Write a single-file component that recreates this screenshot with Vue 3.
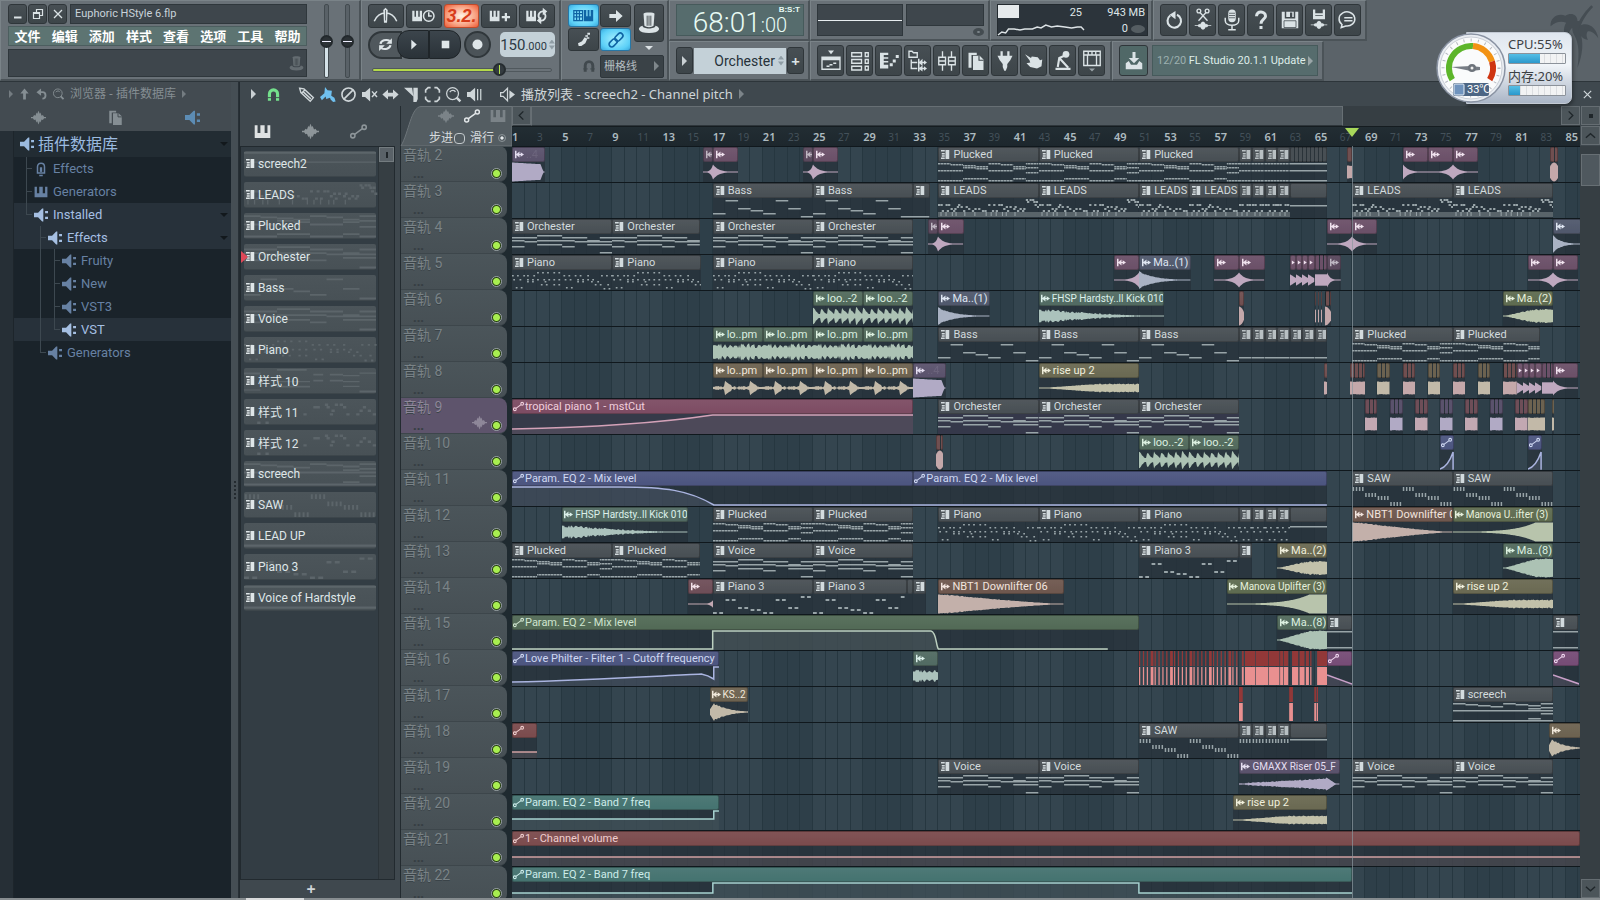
<script setup>
import { ref } from 'vue'

const BARS = 85.15
const pct = (bars) => (bars / BARS) * 100 + '%'

const S = 'fill="none" stroke="currentColor"'
const icons = {
  min: `<path d="M4 17h15v4H4z"/>`,
  max: `<path ${S} stroke-width="2.400" d="M3 9h12v12H3zM9 9V3h12v12h-6M3 11h12"/>`,
  close: `<path ${S} stroke-width="2.600" d="M4 4l16 16M20 4L4 20"/>`,
  metro: `<path ${S} stroke-width="2" d="M0 19C3 12 8 8 15 8s12 4 15 11"/><path d="M12 4l3-3 3 3-1 17h-4z"/><path stroke="#3f474c" d="M15 4v14"/>`,
  clockKeys: `<path d="M0 5h3v8h2V5h3v8h2V5h3v14H0z"/><circle cx="22" cy="12" r="7" fill="#3f474c" stroke="currentColor" stroke-width="2"/><path ${S} stroke-width="2" d="M22 7v5h4"/>`,
  keysPlus: `<path d="M2 5h3v8h2V5h3v8h2V5h3v14H2zM22 8h3v4h4v3h-4v4h-3v-4h-4v-3h4z"/>`,
  keysLoop: `<path d="M0 5h3v8h2V5h3v8h2V5h3v14H0z"/><path ${S} stroke-width="2.400" d="M18 16c-4-5 0-11 5-10M24 8c4 5 0 11-5 10"/><path d="M22 1l6 5-6 5zM20 13v10l-6-5z"/>`,
  loop: `<path ${S} stroke-width="3" d="M5 11a8 6 0 0 1 13-4M19 13a8 6 0 0 1-13 4"/><path d="M21 3v8h-8zM3 21v-8h8z"/>`,
  play: `<path d="M8 3l10 9-10 9z"/>`,
  stop: `<path d="M5 5h14v14H5z"/>`,
  rec: `<circle cx="12" cy="12" r="8"/>`,
  typing: `<path ${S} stroke-width="2" d="M1 4h14v16H1zM1 9h14M1 14h14M5.500 4v16M10 4v16"/><path d="M17 3h4v10h2V3h3v10h2V3h4v18H17z"/>`,
  arrow: `<path d="M2 9h10V3l10 9-10 9v-6H2z"/>`,
  slide: `<path d="M3 17l6-3 4-6 4 2-3 7-6 4-4 0z"/><path d="M14 5h4v2h-4zM17 1h4v3h-4zM16 8h4v2h-4z"/>`,
  link: `<g ${S} stroke-width="2.400" transform="rotate(-45 12 12)"><rect x="-1" y="8" width="14" height="8" rx="4"/><rect x="11" y="8" width="14" height="8" rx="4"/></g>`,
  hat: `<path d="M6 2c0-2 12-2 12 0l-1 13c-2 2-8 2-10 0z"/><path d="M5 15c-7 2-5 8 7 8s14-6 7-8c0 4-14 4-14 0z"/><path stroke="#3f474c" stroke-width="1" d="M10 4v11M12 4v11M14 4v11"/>`,
  magnet: `<path ${S} stroke-width="5" d="M5.500 22v-11a6.500 6.500 0 0 1 13 0v11"/><path stroke="#41494e" stroke-width="1.500" d="M2 17h8M14 17h8"/>`,
  undo: `<path ${S} stroke-width="2.800" d="M7 6a9 9 0 1 0 9-1"/><path d="M14 0v11L6 5z"/>`,
  cut: `<g ${S} stroke-width="1.800"><circle cx="6.500" cy="0" r="2.500"/><circle cx="17.500" cy="0" r="2.500"/><path d="M8 2l10 11M16 2L6 13"/></g><path d="M1 19h4l2-2 1 1 2-3 2-1 2 1 2 3 1-1 2 2h4v1h-4l-2 2-1-1-2 3-2 1-2-1-2-3-1 1-2-2H1z"/>`,
  mic: `<rect x="7" y="-2" width="10" height="17" rx="5"/><path ${S} stroke-width="2" d="M3 9v4c0 8 18 8 18 0V9M12 19v6M7 25h10"/><path stroke="#3f474c" d="M8 3h8M8 6h8M8 9h8"/>`,
  help: `<path ${S} stroke-width="4" d="M6 7c0-8 12-7 12 0 0 4-6 4-6 10"/><path d="M10 20h4v4h-4z"/>`,
  save: `<path d="M1 1h4v9h14V1h4v22H1zM7 1h10v7h-2V2h-3v6H7z"/><path stroke="#3f474c" fill="none" d="M4 13h16v9H4z"/>`,
  saveWave: `<path d="M4-2h3v5h10v-5h3v13H4z"/><path stroke="#3f474c" d="M7 6h10"/><path d="M1 18h4l2-2 1 1 2-3 2-1 2 1 2 3 1-1 2 2h4v1h-4l-2 2-1-1-2 3-2 1-2-1-2-3-1 1-2-2H1z"/>`,
  chat: `<path ${S} stroke-width="2" d="M3 22l1-4a10.500 9.500 0 1 1 5 2zM7 9h11M7 13h11"/>`,
  playlist: `<path d="M8-2h8l-4 5zM6 18h4v2H6zM10 16h4v2h-4zM15 14h4v2h-4z"/><path ${S} stroke-width="1.800" d="M0 7h24v16H0z"/><path d="M0 7h24v4H0z"/>`,
  chanrack: `<path ${S} stroke-width="1.800" d="M1 1h13v5H1zM1 10h13v5H1zM1 19h13v5H1zM19 1h4v5h-4zM19 10h4v5h-4zM19 19h4v5h-4z"/>`,
  pianoroll: `<path d="M0 1h11v3H5v3h6v2H5v3h6v2H5v3h6v5H0zM13 15h4v4h-4zM17 10h4v4h-4zM21 4h4v4h-4z"/>`,
  tree: `<path ${S} stroke-width="1.800" d="M0-1h4l2 2h5v6H0zM3 10v12h8M3 14h8"/><path d="M12 9h2v4l4-4v4h2v-2l4 3-4 3v-2h-2v4l-4-4v4h-2zM12 18h2v3l4-3v3h2v-2l4 3-4 3v-2h-2v3l-4-3v3h-2z"/>`,
  mixer: `<path ${S} stroke-width="1.800" d="M6-1v8M6 17v8M18-1v8M18 17v8M1 7h9v10H1zM14 7h9v10h-9zM1 12h9M14 12h9"/>`,
  pages: `<path d="M2 1h11v3H6v17H2zM8 5h9l5 5v14H8z"/><path stroke="#3f474c" stroke-width="1.500" fill="none" d="M16 5v6h6"/>`,
  plug: `<path d="M6-1h3v6h6v-6h3v6h4l-3 6-4 5v4l-2 5h-2l-2-5v-4l-4-5-3-6h4z"/>`,
  tap: `<path d="M0 3l8 5 1-2 8 1 3 4 3-1-1 9-6 3-9-2-5-5 5-1-1-3z"/>`,
  rob: `<path d="M2 21h20v3H2z"/><path ${S} stroke-width="2.800" d="M16 4L7 8 5 20M8 9l11 12"/><circle cx="16" cy="3" r="4.500"/>`,
  grid: `<path ${S} stroke-width="1.800" d="M1-1h22v19H1zM1 4h22M6 4v14M18 4v14M7 0v4M12 0v4M17 0v4"/><path fill="#9aa3a8" d="M8 22h8l-4 4z"/>`,
  download: `<path d="M10 0h4v8h5l-7 7-7-7h5z"/><path d="M1 15l4-3 3 5h8l3-5 4 3v8H1z"/>`,
  wave: `<path d="M0 11h3l2-3 2 1 2-5 1 2 2-5 2 5 1-2 2 5 2-1 2 3h3v2h-3l-2 3-2-1-2 5-1-2-2 5-2-5-1 2-2-5-2 1-2-3H0z"/>`,
  keys: `<path d="M1 3h4v11h4V3h6v11h4V3h4v18H1z"/>`,
  auto: `<path ${S} stroke-width="2.200" d="M6.500 16L17.500 8"/><circle cx="4" cy="18" r="3" ${S} stroke-width="2.200"/><circle cx="20" cy="6" r="3" ${S} stroke-width="2.200"/>`,
  up: `<path d="M12 0l9 11h-6v13H9V11H3z"/>`,
  back: `<path ${S} stroke-width="4" d="M8 8h6c9 0 9 14 0 14"/><path d="M11 0v16L1 8z"/>`,
  lens: `<circle cx="10.500" cy="10.500" r="9.500" ${S} stroke-width="2"/><path ${S} stroke-width="2" d="M6 8c3-4 8-3 9 0"/><path ${S} stroke-width="4" d="M17 17l6 6"/>`,
  plugin: `<path d="M0 8h7l7-7h2v22h-2l-7-7H0zM19 5h5v4h-5zM19 15h5v4h-5z"/>`,
  pencil: `<path ${S} stroke-width="2.200" d="M1 2l7 1 15 14-5 6L3 9zM6 7l13 12M10 4L4 10"/>`,
  paint: `<path d="M8 0l4 5 7 1-1 8 5 3 2 6-4 1-4-4-1-3-6 2-1-4-6 6-3-5 7-6z"/>`,
  ban: `<circle cx="12" cy="12" r="10.500" ${S} stroke-width="2.600"/><path ${S} stroke-width="2.600" d="M5 19L19 5"/>`,
  mute: `<path d="M0 8h5l8-7v22l-8-7H0z"/><path ${S} stroke-width="2.400" d="M16 7l8 9M24 7l-8 9"/>`,
  lr: `<path d="M-1 12l9-8v5h8V4l9 8-9 8v-5H8v5z"/>`,
  slice: `<path d="M0 1h13l2 14zM15 1h7v18l-2 5h-5z"/>`,
  zoomsel: `<path ${S} stroke-width="2.600" d="M1 9V5l4-4h4M15 1h4l4 4v4M23 15v4l-4 4h-4M9 23H5l-4-4v-4"/>`,
  speaker: `<path d="M0 8h5l8-7v22l-8-7H0zM16 3h2v18h-2zM21 3h2v18h-2z"/>`,
  speakerOut: `<path ${S} stroke-width="2" d="M1 9h4l7-7v20l-7-7H1z"/><path d="M15 5l9 7-9 7z"/>`,
  effect: `<path ${S} stroke-width="2.600" d="M6 19V8c0-8 12-8 12 0v11zM9 23h6"/><path d="M10 9h4v8h-4z"/>`,
  pattern: `<path d="M0 0h5v2H0zM1 4h4v2H1zM1 7h4v2H1zM0 10h5v2H0zM6 0h5v12H6z"/>`,
  sample: `<path d="M0 1h2v4.200L6 2v3.200h1.500V3L12 6 7.500 9V6.800H6V10L2 6.800V11H0z"/>`,
  mini: `<path d="M2 1l7 5-7 5z"/>`,
}

const menus = ['文件', '编辑', '添加', '样式', '查看', '选项', '工具', '帮助']
const fileTools = [['undo', '撤销'], ['cut', '剪切'], ['mic', '录音'], ['help', '帮助'], ['save', '保存'], ['saveWave', '渲染'], ['chat', '信息']]
const viewTools = ['playlist', 'chanrack', 'pianoroll', 'tree', 'mixer', 'pages', 'plug', 'tap', 'rob', 'grid']
const editTools = ['pencil', 'paint', 'ban', 'mute', 'lr', 'slice', 'zoomsel', 'lens', 'speaker']

const tree = [
  { t: 'Effects', i: 'effect', g: ['T'] },
  { t: 'Generators', i: 'keys', g: ['T'] },
  { t: 'Installed', i: 'plugin', g: ['L'], open: true, hot: true },
  { t: 'Effects', i: 'plugin', g: ['', 'T'], open: true, hot: true },
  { t: 'Fruity', i: 'plugin', g: ['', 'I', 'T'] },
  { t: 'New', i: 'plugin', g: ['', 'I', 'T'] },
  { t: 'VST3', i: 'plugin', g: ['', 'I', 'T'] },
  { t: 'VST', i: 'plugin', g: ['', 'I', 'L'], hot: true },
  { t: 'Generators', i: 'plugin', g: ['', 'L'] },
]

// Note maps: [bar offset, length in bars, y, height]
const line = (rows) => rows.flatMap((ys, b) => ys.map((y) => [b, 1, y, 1.5]))
const dots = (map, w, h) => Object.entries(map).flatMap(([y, xs]) => xs.map((x) => [x, w, +y, h]))
const orch = line([[3, 6, 12], [3, 7], [1, 6, 10], [1, 6, 10], [3, 6, 12], [3, 7], [6, 7, 10], [3, 7, 10, 18]])
const notes = {
  Bass: line([[15], [2], [10], [12], [15], [2], [10], [18]]),
  Orchester: orch,
  Voice: orch,
  Plucked: line([[1, 8, 18], [2, 8, 18], [3, 5, 16], [4, 6, 16], [1, 8, 18], [2, 8, 18], [4, 6, 16], [1, 5, 10, 18]]),
  Piano: dots({
    2: [2, 2.4, 2.8, 3.3, 3.7],
    5: [0, 0.4, 0.9, 1.2, 1.7, 4.1, 4.5, 5, 5.4, 6, 7.1, 7.5, 7.9],
    9: [0.1, 0.6, 1.2, 1.6, 2, 2.5, 2.9, 3.3, 3.7, 4.2, 4.6, 5.2, 5.6, 6, 6.4],
    11: [1.2, 1.6, 2.6, 5.2, 5.6, 6.3, 6.8],
    14: [2.3, 2.7, 3.3, 3.7, 6.6, 7, 7.6],
    17: [0.3, 0.7, 4.3, 4.7],
    18: [7.3, 7.7],
  }, 0.14, 1.5),
  LEADS: [
    ...dots({
      1: [7, 7.3, 7.5],
      3: [7.6, 7.1, 7.8],
      6: [0, 0.2, 0.6, 0.8, 1.6, 4, 4.4, 4.8, 5, 7.7],
      8: [1.5, 1.8, 2.2, 5.4, 5.7, 6.1, 7.9],
      10: [1, 1.3, 2.4, 2.9, 3.2, 5.2, 6, 6.5, 6.8],
      12: [0.3, 0.7, 1.2, 2, 2.7, 3.5, 3.7, 4.3, 4.6, 5.5, 6.3, 6.7],
    }, 0.18, 2),
    ...dots({ 14: [0.2, 0.6, 1.1, 1.4, 2.1, 2.9, 3.8, 4.2, 4.6, 5.1, 5.4, 6.1] }, 0.08, 4),
  ],
  SAW: [0, 1, 2, 3, 4, 5, 6, 7].flatMap((b) => [0.1, 0.35, 0.6, 0.85].map((o) => [b + o - 0.05, 0.12, [1, 7, 10, 16][b % 4], 4])),
  'Piano 3': dots({ 18: [0, 0.5, 4, 4.5], 5: [1, 1.5, 5, 5.5], 13: [2, 2.5, 6, 6.5], 15: [3, 3.5], 2: [7, 7.5] }, 0.3, 2),
  screech: line([[1, 8, 18], [2, 8, 18], [3, 8, 18], [4, 8, 18], [1, 8, 18], [2, 8, 18], [3, 6, 8, 16, 18], [1, 5, 8, 11, 18]]),
  hold: [[0, 2, 1, 1.5], [0, 2, 17, 1.5]],
  one: [],
  sawtick: [0.05, 0.3, 0.55, 0.8].map((o) => [o, 0.12, 1, 4]),
  'LEAD UP': [[0, 8, 17, 2]],
  screech2: [[0, 8, 0, 1.5], [0, 8, 8, 1]],
  'Voice of Hardstyle': [[0, 8, 0, 1.5], [0, 8, 17, 2]],
  '样式 10': [[0, 1, 3, 1.5], [0, 1, 17, 1], [2, 1.8, 0, 1.5], [2, 2, 14, 1.5], [2, 2, 10, 1], [4.2, 0.6, 4, 1.5], [5.2, 0.8, 4, 1.5], [4.2, 0.6, 9, 1.5], [5.2, 0.8, 9, 1.5], [6, 1, 5, 1], [6, 1, 10, 1], [6, 1, 14, 1], [7, 1, 3, 1], [7, 1, 18, 1.5]],
}
notes['样式 11'] = dots({ 3: [4.9, 5.5, 5.8], 5: [4.2, 4.4, 5, 6, 7.2], 8: [5.3, 7, 7.5], 11: [3.6, 5.2, 6.2, 6.8, 7.8], 18: [0.8, 1.3] }, 0.2, 2)
notes['样式 12'] = notes['样式 11']

const rect = ([x, w, y, h]) => `M${x * 100} ${y}h${w * 100}v${h}h${-w * 100}z`
const notePath = (key, len) => (notes[key] || []).filter((n) => n[0] < len).map(rect).join('')

const patterns = ['screech2', 'LEADS', 'Plucked', 'Orchester', 'Bass', 'Voice', 'Piano', '样式 10', '样式 11', '样式 12', 'screech', 'SAW', 'LEAD UP', 'Piano 3', 'Voice of Hardstyle']

const rnd = (i, s) => {
  const v = Math.sin(i * 12.9898 + s * 78.233) * 43758.5453
  return v - Math.floor(v)
}
const env = {
  block: (t) => (t < 0.88 ? 1 - t * 0.2 : t < 0.95 ? 0.8 - (t - 0.88) * 9 : 0.05),
  pre: (t) => Math.exp(-4.6 * (1 - t)) * 0.8,
  post: (t) => Math.exp(-4.6 * t) * 0.8,
  tail: (t) => Math.exp(-8 * (1 - t)) * 0.4,
  decay: (t, j) => Math.exp(-3.6 * t) * (1 - j * 0.15),
  kick: (t, j) => Math.pow(1 - t, 1.5) * (0.8 - j * 0.35),
  down: (t, j) => Math.pow(1 - t, 1.2) * (1.1 - j * 0.12),
  riser: (t, j) => Math.pow(Math.min(1, t / 0.65), 1.1) * (1 - j * 0.12),
  riserS: (t, j) => Math.pow(Math.min(1, t / 0.6), 1.1) * (0.75 - j * 0.18),
  uplift: (t) => Math.min(1, Math.exp(-5 * (0.82 - t))),
  rise: (t, j) => 0.06 + 0.42 * Math.min(1, Math.max(0, (t - 0.1) / 0.5)) * (1 - j * 0.25),
  beats: (t, j) => {
    const p = (t * 4) % 2
    return p < 0.9 ? 0.08 + j * 0.14 : p < 1.5 ? 0.85 * Math.exp(-1.8 * (p - 0.9)) : 0.25 * (1.9 - p) + j * 0.2
  },
  loop: (t, j) => {
    const p = (t * 7) % 1
    return p < 0.2 ? 0.95 - j * 0.3 : Math.max(0.2, 0.95 - p * 0.8 - j * 0.15)
  },
  dense: (t, j) => 0.4 + j * 0.35 + (((t * 9) % 1) < 0.5 ? 0.2 : 0),
  full: (t, j) => 0.7 - j * 0.06,
  sliver: (t) => 0.6 + 0.4 * Math.sin(t * 3.14),
  drop: (t) => 1 - t * t * 0.6,
  pulse: (t) => 0.6 * (1 - t * 0.7),
  pulseEnd: () => 0.6,
  gm: (t, j) => (t < 0.87 ? 0.1 + t * 0.6 - j * 0.1 : Math.max(0.05, 0.7 - (t - 0.87) * 7)),
  ks: (t, j) => (t < 0.12 ? 0.3 + t * 6 : Math.exp(-3 * (t - 0.12)) * (1 - j * 0.25)),
  noise: (t, j) => 0.35 + j * 0.35,
}
function wavePath(kind, len) {
  const n = Math.max(4, Math.round(len * 12.5))
  const top = []
  const bottom = []
  for (let i = 0; i <= n; i++) {
    const t = i / n
    const a = Math.max(0.06, Math.min(1, env[kind](t, rnd(i, 3)))) * 9.5
    const x = Math.round(t * len * 100)
    top.push(`${x} ${(10 - a).toFixed(1)}`)
    bottom.unshift(`${x} ${(10 + a).toFixed(1)}`)
  }
  return 'M' + top.concat(bottom).join('L') + 'z'
}

const P = (start, end, name) => ({ k: 'pattern', s: start, e: end, name, notes: name })
const rep = (name, ...starts) => starts.map((s) => P(s, s + 8, name))
const minis = (from, count, src) => Array.from({ length: count }, (_, i) => ({ k: 'pattern', s: from + i, e: from + i + 1, name: '', notes: src, tiny: true }))
const plain = (s, e, y, striped) => ({ k: 'pattern', s, e, name: '', bare: true, striped, rows: y })
const W = (color, wave, s, e, name = '', extra = {}) => ({ k: 'sample', color, wave, s, e, name, ...extra })
const A = (color, s, e, name, curve, extra = {}) => ({ k: 'auto', color, s, e, name, curve, ...extra })
const fade = { faded: true }
const tight = { tight: true }
const cluster = (color, s, e) => W(color, 'full', s, e, '', { bare: true, striped: true })

const stutter = (s) => [0, 0.5, 1, 1.5].map((o) => W('pink', 'pulse', s + o, s + o + 0.5, '', { mini: true }))
const redSegs = []
for (let i = 0; i < 26; i++) redSegs.push([i * 0.31, i % 5 === 3 ? 0.22 : 0.1])
;[[8.2, 0.15], [8.45, 0.8], [9.3, 1], [10.35, 0.85], [11.25, 0.25], [11.55, 0.35], [12.2, 0.5], [12.8, 0.4], [13.3, 0.25], [13.65, 0.1], [14.2, 0.8]].forEach((x) => redSegs.push(x))

const tracks = [
  { n: 2, clips: [W('purple', 'block', 1, 3.6, '..4', { dimName: true }), W('pink', 'pre', 16.2, 17, '', fade), W('pink', 'post', 17, 19), W('pink', 'pre', 24.2, 25, '', fade), W('pink', 'post', 25, 27), ...rep('Plucked', 35, 43, 51), ...minis(59, 4, 'Plucked'), plain(63, 66, [1, 8, 18], true), cluster('brick', 67.6, 68), W('pink', 'post', 72, 74), W('pink', 'pre', 74, 76), W('pink', 'post', 76, 78), W('brick', 'sliver', 83.75, 84.4, '', { bare: true, striped: true })] },
  { n: 3, clips: [...rep('Bass', 17, 25), { k: 'pattern', s: 33, e: 34.3, name: '', rows: [18] }, ...rep('LEADS', 35, 43), P(51, 55, 'LEADS'), P(55, 59, 'LEADS'), ...minis(59, 4, 'LEADS'), plain(63, 66, [7]), ...rep('LEADS', 68, 76)] },
  { n: 4, clips: [P(1, 9, 'Orchester'), P(9, 16, 'Orchester'), ...rep('Orchester', 17, 25), W('pink', 'pre', 34.2, 35, '', fade), W('pink', 'post', 35, 37), W('pink', 'pre', 66, 68), W('pink', 'post', 68, 70), W('slate', 'decay', 84, 86.2)] },
  { n: 5, clips: [P(1, 9, 'Piano'), P(9, 16.1, 'Piano'), ...rep('Piano', 17, 25), W('pink', 'pre', 49, 51), W('slate', 'decay', 51, 55.1, 'Ma..(1)'), W('pink', 'pre', 57, 59), W('pink', 'post', 59, 61), ...stutter(63), W('pink', 'pulseEnd', 65, 66, '', { bare: true, striped: true }), W('pink', 'post', 66, 67.1, '', fade), W('pink', 'pre', 82, 84), W('pink', 'post', 84, 86)] },
  { n: 6, clips: [W('green', 'loop', 25, 29, 'loo..-2'), W('green', 'loop', 29, 33, 'loo..-2'), W('slate', 'decay', 35, 39.1, 'Ma..(1)'), W('mint', 'kick', 43, 53, 'FHSP Hardsty..ll Kick 010', tight), W('brick', 'drop', 59, 59.4, '', { bare: true }), ...[65, 65.25, 65.5].map((s) => W('brick', 'full', s, s + 0.08, '', { bare: true })), W('brick', 'drop', 65.8, 66.3, '', { bare: true, striped: true }), W('olive', 'riserS', 80, 84, 'Ma..(2)')] },
  { n: 7, clips: [...[17, 21, 25, 29].map((s) => W('green', 'dense', s, s + 4, 'lo..pm')), ...rep('Bass', 35, 43, 51), ...minis(59, 7, 'Bass'), P(68, 76, 'Plucked'), P(76, 83, 'Plucked')] },
  { n: 8, clips: [...[17, 21, 25, 29].map((s) => W('brown', 'beats', s, s + 4, 'lo..pm')), W('purple', 'block', 33, 35.6, '..4', { dimName: true }), W('khaki', 'rise', 43, 51, 'rise up 2'), W('brick', 'full', 65.75, 66, '', { bare: true }), cluster('brick', 67.8, 69), cluster('brown', 70, 71), cluster('brick', 72, 73), cluster('brown', 74, 75), cluster('brick', 76, 77), cluster('brown', 78, 79), cluster('brick', 80, 81.1), ...stutter(81.1), W('pink', 'pulseEnd', 83.1, 84, '', { bare: true, striped: true }), W('pink', 'post', 84, 86)] },
  { n: 9, hot: true, clips: [A('rose', 1, 33, 'tropical piano 1 - mstCut', 'M0 15C260 13 400 7 500 1H1000'), ...rep('Orchester', 35, 43, 51), cluster('rosy', 69, 70), cluster('purple', 71, 72), cluster('rosy', 73, 74), cluster('purple', 75, 76), cluster('rosy', 77, 78), cluster('purple', 79, 80), cluster('rosy', 81, 82), cluster('brown', 82, 83.4), cluster('brown', 83.9, 84.1)] },
  { n: 10, clips: [W('brick', 'sliver', 34.8, 35.4, '', { bare: true, striped: true }), W('green', 'loop', 51, 55, 'loo..-2'), W('green', 'loop', 55, 59, 'loo..-2'), A('blue', 75, 76.1, '', 'M0 19C500 17 800 8 950 2V19H1000'), A('blue', 82, 83.1, '', 'M0 19C500 17 800 8 950 2V19H1000')] },
  { n: 11, clips: [A('blue', 1, 33, 'Param. EQ 2 - Mix level', 'M0 1H270C380 1 440 4 503 19H1000'), A('blue', 33, 66, 'Param. EQ 2 - Mix level', 'M0 19H1000'), ...rep('SAW', 68, 76)] },
  { n: 12, clips: [W('mint', 'kick', 5, 15, 'FHSP Hardsty..ll Kick 010', tight), ...rep('Plucked', 17, 25), ...rep('Piano', 35, 43, 51), ...minis(59, 4, 'Piano'), plain(63, 66, [4]), W('tan', 'down', 68, 76, 'NBT1 Downlifter 06'), W('olive', 'uplift', 76, 84, 'Manova U..ifter (3)', tight)] },
  { n: 13, clips: [P(1, 9, 'Plucked'), P(9, 16, 'Plucked'), ...rep('Voice', 17, 25), P(51, 59, 'Piano 3'), { k: 'pattern', s: 59, e: 60, name: '', notes: 'one' }, W('khaki', 'riserS', 62, 66, 'Ma..(2)'), W('green', 'riser', 80, 84, 'Ma..(8)')] },
  { n: 14, clips: [W('rosy', 'tail', 15, 17), P(17, 25, 'Piano 3'), P(25, 32.5, 'Piano 3'), plain(32.5, 33, []), { k: 'pattern', s: 33, e: 34, name: '', notes: 'one' }, W('tan', 'down', 35, 45, 'NBT1 Downlifter 06'), W('olive', 'uplift', 58, 66, 'Manova Uplifter (3)', tight), W('khaki', 'rise', 76, 84, 'rise up 2')] },
  { n: 15, clips: [A('moss', 1, 51, 'Param. EQ 2 - Mix level', 'M0 19H320V1H668C677 2 676 16 680 19H950'), W('green', 'riser', 62, 66, 'Ma..(8)'), { k: 'pattern', s: 66, e: 68, name: '', notes: 'hold' }, { k: 'pattern', s: 84, e: 86, name: '', notes: 'hold' }] },
  { n: 16, clips: [A('blue', 1, 17.5, 'Love Philter - Filter 1 - Cutoff frequency', 'M0 16C400 14 700 10 915 8C940 9 960 11 975 13V1H1000'), W('mint', 'noise', 33, 35), { k: 'segs', color: 'red', s: 51, e: 66, segs: redSegs }, A('magenta', 66, 68, '', 'M0 9L1000 18'), A('magenta', 84, 86.1, '', 'M0 9L1000 18')] },
  { n: 17, clips: [W('brown', 'ks', 16.75, 19.8, 'KS..2', tight), { k: 'segs', color: 'red', s: 59, e: 66, segs: [[0, 0.3], [4, 0.3], [6, 0.15], [6.2, 0.1]] }, P(76, 84, 'screech')] },
  { n: 18, clips: [A('brickA', 1, 3, '', 'M0 14H1000'), P(51, 59, 'SAW'), ...minis(59, 4, 'sawtick'), plain(63, 66, [1]), W('brown', 'ks', 83.7, 86.2)] },
  { n: 19, clips: [...rep('Voice', 35, 43), W('purple', 'gm', 59, 67, 'GMAXX Riser 05_F', tight), ...rep('Voice', 68, 76)] },
  { n: 20, clips: [A('teal', 1, 17.5, 'Param. EQ 2 - Band 7 freq', 'M0 9H975V1H1000'), W('khaki', 'rise', 58.5, 66, 'rise up 2')] },
  { n: 21, clips: [A('brickA', 1, 86.15, '1 - Channel volume', 'M0 11H1000')] },
  { n: 22, clips: [A('teal', 1, 68, 'Param. EQ 2 - Band 7 freq', 'M0 11H239V1H746V11H1000')] },
]
const rowsPath = (ys, len) => (ys || []).map((y) => rect([0, len, y, 1.5])).join('')

const ruler = Array.from({ length: 43 }, (_, i) => i * 2 + 1)
const volume = ref(50)
const pitch = ref(50)
const song = ref(73)
const bpm = ref('150.000')
</script>

<template>
  <div class="daw">
    <header class="toolbar">
      <section class="panel main-panel">
        <div class="titlecol">
          <div class="titlerow">
            <button v-for="b in ['min', 'max', 'close']" :key="b" class="btn winbtn" :aria-label="b"><svg viewBox="0 0 24 24" v-html="icons[b]" /></button>
            <div class="title inset">Euphoric HStyle 6.flp</div>
          </div>
          <nav class="menu"><button v-for="m in menus" :key="m">{{ m }}</button></nav>
          <div class="hint inset"><svg viewBox="0 0 24 24" v-html="icons.hat" /></div>
        </div>
        <div class="faders">
          <input v-model="volume" type="range" class="fader vol" aria-label="主音量" />
          <input v-model="pitch" type="range" class="fader" aria-label="主音高" />
        </div>
      </section>

      <section class="panel transport">
        <div class="row gap2">
          <button class="btn t1" aria-label="节拍器"><svg class="wide" viewBox="0 0 30 24" v-html="icons.metro" /></button>
          <button class="btn t1" aria-label="等待输入"><svg class="wide" viewBox="0 0 30 24" v-html="icons.clockKeys" /></button>
          <button class="btn t1 count">3.2.</button>
          <button class="btn t1" aria-label="叠录"><svg class="wide" viewBox="0 0 30 24" v-html="icons.keysPlus" /></button>
          <button class="btn t1" aria-label="循环录制"><svg class="wide" viewBox="0 0 30 24" v-html="icons.keysLoop" /></button>
        </div>
        <div class="row play">
          <button class="loop" aria-label="循环"><svg viewBox="0 0 24 24" v-html="icons.loop" /></button>
          <button class="pp left" aria-label="播放"><svg viewBox="0 0 24 24" v-html="icons.play" /></button>
          <button class="pp right" aria-label="停止"><svg viewBox="0 0 24 24" v-html="icons.stop" /></button>
          <button class="rec" aria-label="录音"><svg viewBox="0 0 24 24" v-html="icons.rec" /></button>
          <label class="tempo"><input v-model="bpm" class="hidden-input" aria-label="速度" /><span class="tempo-text" aria-hidden="true">150<small>.000</small></span><i class="spin" /></label>
        </div>
        <input v-model="song" type="range" class="song" aria-label="播放位置" />
      </section>

      <section class="panel modes">
        <div class="modegrid">
          <button class="btn lit" aria-label="键盘输入"><svg class="wide" viewBox="0 0 33 24" v-html="icons.typing" /></button>
          <button class="btn" aria-label="滚动"><svg viewBox="0 0 24 24" v-html="icons.arrow" /></button>
          <button class="btn" aria-label="滑音"><svg viewBox="0 0 24 24" v-html="icons.slide" /></button>
          <button class="btn lit" aria-label="链接"><svg viewBox="0 0 24 24" v-html="icons.link" /></button>
        </div>
        <div class="hatcol">
          <button class="btn hat" aria-label="处理"><svg viewBox="0 0 24 24" v-html="icons.hat" /></button>
          <i class="tri down" />
        </div>
        <div class="snap">
          <svg viewBox="0 0 24 24" v-html="icons.magnet" />
          <div class="snapbox"><select aria-label="吸附"><option>栅格线</option></select><i class="tri right" /></div>
        </div>
      </section>

      <div class="stack">
        <div class="srow">
          <section class="panel clockp"><div class="clock"><span class="big">68:01</span><span class="small">:00</span><em>B:S:T</em></div></section>
          <section class="panel scopes">
            <div class="inset scope"><i /></div>
            <div class="peaks"><div class="inset peak" /><span class="eye" /></div>
          </section>
          <section class="panel cpu">
            <div class="cpubox">
              <div class="cpul"><div class="meter"><i /><b>25</b></div>
                <svg class="graph" viewBox="0 0 90 17" preserveAspectRatio="none"><path d="M0 15l4-3 4 1 3-4h6l6 1 5-1 8 0 5-2 4 1 5-3 6 2 6-1 8 1 7 1 6-1 4 0 3 3" fill="none" stroke="#dde3e6" stroke-width="1.5" /></svg>
              </div>
              <div class="cpur"><b>943 MB</b><span><b>0</b><i class="lips" /></span></div>
            </div>
          </section>
          <section class="panel files"><button v-for="[i, l] in fileTools" :key="i" class="btn tool" :aria-label="l"><svg viewBox="0 0 24 24" v-html="icons[i]" /></button></section>
        </div>
        <div class="srow">
          <section class="panel clockp pat">
            <button class="btn" aria-label="样式菜单"><i class="tri right" /></button>
            <button class="patname">Orchester<i class="spin" /></button>
            <button class="btn plus">+</button>
          </section>
          <section class="panel views"><button v-for="i in viewTools" :key="i" class="btn tool" :aria-label="i"><svg viewBox="0 0 24 24" v-html="icons[i]" /></button></section>
          <section class="panel news">
            <button class="btn tool green-btn" aria-label="下载"><svg viewBox="0 0 24 24" v-html="icons.download" /></button>
            <a href="#" class="newsbox"><span>12/20</span>FL Studio 20.1.1 Update<i class="tri right" /></a>
          </section>
        </div>
      </div>
      <svg class="palm" viewBox="0 0 60 80"><path d="M50 0l2 2C44 10 38 20 36 30c6 10 4 28-2 42 2-16 2-28-4-38-2-4-2-6-2-8-4 4-5 8-3 14-8-4-8-14-4-20-6-2-12-1-18 4C2 14 12 8 20 12c6-4 14-2 14 6l2 0C42 8 46 4 50 0z" /><path d="M36 24c8-6 20 0 22 14-4-6-8-8-12-8-2 2-2 6 0 10-8-2-12-8-10-16z" /></svg>
    </header>

    <main class="body">
      <aside class="browser">
        <div class="bhead">
          <div class="bpath">
            <i class="tri right" />
            <svg viewBox="0 0 24 24" v-html="icons.up" /><svg viewBox="0 0 24 24" v-html="icons.back" /><svg viewBox="0 0 24 24" v-html="icons.lens" />
            <span>浏览器 - 插件数据库</span><i class="tri right" />
          </div>
          <div class="btabs">
            <button aria-label="采样"><svg viewBox="0 0 24 24" v-html="icons.wave" /></button>
            <button aria-label="文件"><svg viewBox="0 0 24 24" v-html="icons.pages" /></button>
            <button class="on" aria-label="插件"><svg viewBox="0 0 24 24" v-html="icons.plugin" /></button>
          </div>
        </div>
        <div class="tree">
          <div class="troot"><svg viewBox="0 0 24 24" v-html="icons.plugin" /><span>插件数据库</span><i class="tri down" /></div>
          <div v-for="(r, k) in tree" :key="k" class="trow" :class="{ hot: r.hot }">
            <i v-for="(g, j) in r.g" :key="j" class="guide" :class="['g' + g, { last: j === r.g.length - 1 }]" />
            <svg viewBox="0 0 24 24" v-html="icons[r.i]" /><span>{{ r.t }}</span>
            <i v-if="r.open" class="tri down" />
          </div>
        </div>
      </aside>
      <div class="divider"><i /></div>

      <section class="playlist">
        <div class="ptitle">
          <i class="tri right" />
          <svg class="mag" viewBox="0 0 24 24" v-html="icons.magnet" />
          <button v-for="t in editTools" :key="t" :class="t" :aria-label="t"><svg viewBox="0 0 24 24" v-html="icons[t]" /></button>
          <svg class="out" viewBox="0 0 24 24" v-html="icons.speakerOut" />
          <h1>播放列表 - screech2 - Channel pitch</h1><i class="tri right dim" />
          <button class="x" aria-label="关闭"><svg viewBox="0 0 24 24" v-html="icons.close" /></button>
        </div>
        <div class="pmain">
          <div class="picker">
            <div class="ptabs">
              <button class="on" aria-label="样式"><svg viewBox="0 0 24 24" v-html="icons.keys" /></button>
              <button aria-label="音频"><svg viewBox="0 0 24 24" v-html="icons.wave" /></button>
              <button aria-label="自动化"><svg viewBox="0 0 24 24" v-html="icons.auto" /></button>
            </div>
            <div class="plist">
              <div class="pitems">
                <button v-for="p in patterns" :key="p" class="pitem" :class="{ cur: p === 'Orchester' }">
                  <svg class="mininotes" viewBox="0 0 800 20" preserveAspectRatio="none"><path :d="notePath(p, 8)" /></svg>
                  <svg class="pi" viewBox="0 0 12 12" v-html="icons.pattern" /><span>{{ p }}</span>
                </button>
              </div>
              <div class="pscroll"><i /></div>
            </div>
            <button class="addpat">+</button>
          </div>

          <div class="arr">
            <div class="ahead">
              <div class="corner">
                <svg class="cshape" viewBox="0 0 111 40" preserveAspectRatio="none"><path d="M0 40C8 26 10 1 20 0.500H111V40z" /></svg>
                <div class="ctop"><svg viewBox="0 0 24 24" v-html="icons.wave" /><svg class="on" viewBox="0 0 24 24" v-html="icons.auto" /><svg viewBox="0 0 24 24" v-html="icons.keys" /></div>
                <div class="cbot"><label>步进<input type="checkbox" /></label><label>滑行<input type="radio" checked /></label></div>
              </div>
              <div class="scrollruler">
                <div class="hscroll"><button aria-label="向左"><svg viewBox="0 0 24 24"><path d="M16 3l-9 9 9 9" fill="none" stroke="currentColor" stroke-width="3" /></svg></button><div class="thumb" /><div class="rest" /><button aria-label="向右"><svg viewBox="0 0 24 24"><path d="M8 3l9 9-9 9" fill="none" stroke="currentColor" stroke-width="3" /></svg></button></div>
                <div class="ruler">
                  <span v-for="n in ruler" :key="n" :class="{ major: n % 4 === 1 }" :style="{ left: pct(n - 1) }">{{ n }}</span>
                  <i class="marker" :style="{ left: pct(67) }" />
                </div>
              </div>
              <div class="vtop"><button aria-label="选项"><i class="sq" /></button><button aria-label="向上"><svg viewBox="0 0 24 24"><path d="M2 17l10-9 10 9" fill="none" stroke="currentColor" stroke-width="3" /></svg></button></div>
            </div>
            <div class="abody">
              <div class="heads">
                <div v-for="t in tracks" :key="t.n" class="head" :class="{ hot: t.hot }">
                  <span>音轨 {{ t.n }}</span><small>...</small>
                  <svg v-if="t.hot" viewBox="0 0 24 24" v-html="icons.wave" />
                  <button class="led" :aria-label="'静音 ' + t.n" />
                </div>
              </div>
              <div class="lanes">
                <div v-for="t in tracks" :key="t.n" class="lane" :class="{ hot: t.hot }">
                  <template v-for="(c, i) in t.clips" :key="i">
                    <div v-if="c.k === 'segs'" class="clip segs" :class="c.color" :style="{ left: pct(c.s - 1), width: pct(c.e - c.s) }">
                      <svg class="seghead" :viewBox="`0 0 ${(c.e - c.s) * 100} 15`" preserveAspectRatio="none"><path :d="c.segs.map((s) => rect([s[0], s[1], 0, 15])).join('')" /></svg>
                      <svg class="wave" :viewBox="`0 0 ${(c.e - c.s) * 100} 20`" preserveAspectRatio="none"><path :d="c.segs.map((s) => rect([s[0], s[1], 1, 18])).join('')" /></svg>
                    </div>
                    <div v-else class="clip" :class="[c.k, c.color, { tight: c.tight, faded: c.faded, striped: c.striped, tiny: c.tiny, mini: c.mini }]" :style="{ left: pct(c.s - 1), width: pct(c.e - c.s) }">
                      <div class="chead">
                        <svg v-if="!c.bare" :viewBox="c.k === 'auto' ? '0 0 24 24' : '0 0 12 12'" v-html="c.mini ? icons.mini : icons[c.k]" />
                        <span v-if="c.name" :class="{ ghost: c.dimName }">{{ c.name }}</span>
                      </div>
                      <svg v-if="c.k === 'pattern'" class="notes" :class="{ dash: c.notes === 'Plucked', band: c.notes === 'LEADS' }" :viewBox="`0 0 ${(c.e - c.s) * 100} 20`" preserveAspectRatio="none">
                        <path :d="c.rows ? rowsPath(c.rows, c.e - c.s) : notePath(c.notes, c.e - c.s)" />
                      </svg>
                      <svg v-else-if="c.k === 'sample'" class="wave" :viewBox="`0 0 ${(c.e - c.s) * 100} 20`" preserveAspectRatio="none"><path :d="wavePath(c.wave, c.e - c.s)" /></svg>
                      <svg v-else class="curve" viewBox="0 0 1000 20" preserveAspectRatio="none">
                        <path class="area" :d="c.curve + 'V20H0z'" /><path class="line" :d="c.curve" />
                      </svg>
                    </div>
                  </template>
                </div>
                <i class="playhead" :style="{ left: pct(67) }" />
              </div>
              <div class="vscroll"><i class="vthumb" /><button aria-label="向下"><svg viewBox="0 0 24 24"><path d="M2 8l10 9 10-9" fill="none" stroke="currentColor" stroke-width="3" /></svg></button></div>
            </div>
          </div>
        </div>
      </section>
    </main>
    <footer class="edge"><i /></footer>

    <div class="gadget">
      <svg class="gauge" viewBox="0 0 70 70">
        <circle cx="35" cy="35" r="34" fill="#e9edf2" stroke="#8a93a3" stroke-width="1.500" />
        <circle cx="35" cy="35" r="31" fill="#fafbfc" stroke="#c9ced6" />
        <circle cx="35" cy="35" r="28" fill="none" stroke="#b5b9c0" stroke-width="3" stroke-dasharray="1 6.300" />
        <g fill="none" stroke-width="6"><path d="M16.300 46.700A22 22 0 0 1 37 13.100" stroke="#5cb52a" /><path d="M37 13.100A22 22 0 0 1 56 28.500" stroke="#f29214" /><path d="M56 28.500A22 22 0 0 1 53.700 46.700" stroke="#cf3512" /></g>
        <path d="M15 34l20-1 9 1v3l-9 1z" fill="#777d85" /><circle cx="36" cy="35" r="4" fill="#6d737b" /><circle cx="36" cy="35" r="1.500" fill="#eee" />
        <rect x="17" y="50" width="36" height="13" rx="2" fill="#4d6684" /><rect x="18" y="51" width="10" height="11" rx="1" fill="#6f93bd" stroke="#e6eef7" />
      </svg>
      <span class="temp">33℃</span>
      <div class="stats"><p>CPU:55%</p><div class="bar"><i :style="{ width: '55%' }" /></div><p>内存:20%</p><div class="bar"><i :style="{ width: '19%' }" /></div></div>
    </div>
  </div>
</template>

<style>
html, body { margin: 0; background: #3e474d; }
</style>

<style scoped>
.daw { --narrow: Roboto, "Noto Sans CJK SC", sans-serif; --sans: "Noto Sans", "Noto Sans CJK SC", sans-serif; position: relative; display: flex; flex-direction: column; height: 100vh; min-width: 1400px; overflow: hidden; font-family: var(--narrow); color: #dfe6e9; background: #3f484e; }
* { box-sizing: border-box; }
button, input, select { font: inherit; color: inherit; border: 0; background: none; padding: 0; margin: 0; }
svg { display: block; fill: currentColor; overflow: visible; flex: none; }
.inset { background: #3e464c; border: 1px solid #2f373c; }
.tri { display: block; width: 0; height: 0; flex: none; }
.tri.right { border: 5px solid transparent; border-left-color: #c9d0d3; border-right: 0; }
.tri.down { border: 4px solid transparent; border-top-color: #dce2e5; border-bottom: 0; }

.toolbar { position: relative; display: flex; flex: none; height: 82px; background: #5b6369; border-bottom: 1px solid #2d353a; }
.panel { background: #697177; border: 1px solid #7a8388; border-right: 2px solid #4b5358; border-bottom: 2px solid #4b5358; display: flex; }
.btn { background: linear-gradient(#474f54, #3d4549); border: 1px solid #2f363a; border-radius: 3px; display: flex; align-items: center; justify-content: center; color: #dbe3e6; }
.btn svg { width: 16px; height: 16px; }
.row { display: flex; }
.gap2 { gap: 2px; }
.main-panel { width: 361px; padding: 3px 4px 2px 7px; gap: 12px; }
.titlecol { width: 299px; display: flex; flex-direction: column; }
.titlerow { display: flex; gap: 1px; height: 20px; }
.winbtn { width: 19px; height: 20px; }
.winbtn svg { width: 12px; height: 12px; }
.title { flex: 1; margin-left: 2px; padding-left: 4px; font-size: 11px; line-height: 17px; color: #c9d3da; }
.menu { display: flex; justify-content: space-around; height: 20px; margin-top: 2px; background: #5d7472; border: 1px solid #4c5e5f; font: bold 13px/18px var(--sans); color: #fff; }
.hint { height: 29px; margin-top: 3px; display: flex; justify-content: flex-end; align-items: center; color: #646c71; padding-right: 2px; }
.hint svg { width: 15px; height: 17px; }
.faders { display: flex; gap: 6px; }
.fader { appearance: none; writing-mode: vertical-lr; direction: rtl; width: 15px; height: 74px; cursor: pointer; }
.fader::-webkit-slider-runnable-track { width: 5px; margin: 0 5px; border: 1px solid #434b50; border-radius: 2px; background: #596167; }
.vol::-webkit-slider-runnable-track { background: linear-gradient(#596167 50%, #d5e2e8 50%); }
.fader::-webkit-slider-thumb { appearance: none; width: 13px; height: 13px; margin-left: -5px; border-radius: 50%; background: linear-gradient(#2c3236 42%, #eef 42%, #eef 58%, #2c3236 58%); border: 2px solid #23292d; }

.transport { flex-direction: column; width: 200px; padding: 3px 4px 2px 6px; }
.t1 { width: 36px; height: 24px; }
.t1 svg { width: 25px; height: 18px; }
.count { background: radial-gradient(#fff3e4, #f9a283 60%, #ee5a34); border-color: #c04a2a; color: #d83c1a; font: italic bold 18px/22px "Liberation Sans", sans-serif; }
.play { margin-top: 2px; height: 30px; align-items: center; }
.loop { width: 34px; height: 28px; border-radius: 14px 0 0 14px; background: #50585d; border: 2px solid #30373b; display: flex; align-items: center; justify-content: center; }
.loop svg { width: 17px; height: 17px; }
.pp { width: 32px; height: 29px; background: linear-gradient(#3c454c, #2a3238); border: 1px solid #1f2529; display: flex; align-items: center; justify-content: center; }
.pp svg { width: 13px; height: 13px; }
.pp.left { border-radius: 12px 0 0 12px; margin-left: -5px; }
.pp.right { border-radius: 0 12px 12px 0; }
.rec { width: 27px; height: 27px; margin-left: 3px; border-radius: 50%; background: #4b5358; border: 2px solid #30373b; display: flex; align-items: center; justify-content: center; }
.rec svg { width: 15px; height: 15px; }
.tempo { position: relative; margin-left: auto; width: 55px; height: 25px; border-radius: 5px; background: #c4d1d8; color: #2d3a45; display: flex; align-items: center; justify-content: center; gap: 2px; }
.hidden-input { position: absolute; inset: 0; width: 100%; opacity: 0; }
.tempo-text { font-size: 15px; }
.tempo-text small { font-size: 11px; }
.spin { width: 6px; height: 10px; background: #8f9da5; clip-path: polygon(50% 0, 100% 40%, 0 40%, 0 60%, 100% 60%, 50% 100%, 0 60%, 0 40%); }
.song { appearance: none; width: 180px; height: 16px; margin: 3px 0 0 4px; }
.song::-webkit-slider-runnable-track { height: 4px; border: 1px solid #50585d; border-radius: 2px; background: linear-gradient(90deg, #b4d94a 72%, #6a7278 72%); }
.song::-webkit-slider-thumb { appearance: none; width: 13px; height: 13px; margin-top: -6px; border-radius: 50%; border: 2px solid #262c30; background: linear-gradient(90deg, #343b40 40%, #b4e64a 40%, #b4e64a 60%, #343b40 60%); }

.modes { display: grid; grid-template-columns: 63px 31px; grid-template-rows: 48px 24px; gap: 2px; width: 108px; padding: 3px 4px 2px 6px; }
.modegrid { display: grid; grid-template-columns: 31px 31px; grid-auto-rows: 23px; gap: 1px; }
.modegrid .wide { width: 23px; height: 15px; }
.lit { background: radial-gradient(#a8f1ff, #5cd0f7 70%, #3aa9dc); border-color: #2777a6; color: #0f64a4; }
.hatcol { display: flex; flex-direction: column; align-items: center; gap: 4px; }
.hat { width: 30px; height: 38px; flex: none; }
.hat svg { width: 22px; height: 24px; }
.snap { grid-column: 1 / 3; display: flex; align-items: center; justify-content: flex-end; gap: 4px; color: #41494e; }
.snap > svg { width: 14px; height: 14px; }
.snapbox { display: flex; align-items: center; width: 64px; height: 23px; border: 1px solid #2e363b; border-radius: 2px; background: #3a4247; padding: 0 4px 0 3px; color: #b4bcc0; font: 11px/20px var(--sans); }
.snapbox select { appearance: none; flex: 1; }
.snapbox .tri { border-left-color: #7f878b; }

.stack { display: flex; flex-direction: column; }
.srow { display: flex; height: 41px; }
.srow .panel { padding: 3px 4px 3px 6px; }
.clockp { width: 141px; }
.clock { position: relative; flex: 1; display: flex; align-items: baseline; justify-content: center; background: #566c6d; border: 1px solid #465a5b; color: #e8fbf4; line-height: 35px; }
.big { font-size: 28px; font-weight: 300; }
.small { font-size: 20px; font-weight: 300; }
.clock em { position: absolute; right: 3px; top: 0; font: bold 8px/10px "Liberation Sans", sans-serif; }
.scopes { width: 180px; gap: 3px; }
.scope { width: 86px; display: flex; align-items: center; }
.scope i { flex: 1; height: 1px; background: #e8edf0; }
.peaks { flex: 1; display: flex; flex-direction: column; align-items: flex-end; }
.peak { width: 100%; height: 23px; }
.eye { width: 11px; height: 8px; margin-top: 2px; border: 2px solid #444c51; border-radius: 50%; background: radial-gradient(#7a8388 1px, #444c51 2px); }
.cpu { width: 163px; }
.cpubox { flex: 1; display: flex; background: #2c343b; border: 1px solid #232a2f; font-size: 11px; line-height: 15px; }
.cpubox b { font-weight: normal; }
.cpul { flex: 1; }
.meter { display: flex; justify-content: space-between; height: 15px; padding-right: 2px; }
.meter i { width: 21px; height: 13px; background: #e6eaec; }
.graph { width: 86px; height: 17px; }
.cpur { width: 63px; padding-right: 2px; text-align: right; }
.cpur span { display: flex; justify-content: flex-end; align-items: center; gap: 3px; margin-top: 1px; }
.lips { width: 14px; height: 8px; border-radius: 50%; background: #555d62; }
.files, .views { gap: 2px; }
.tool { width: 27px; }
.tool svg { width: 18px; height: 20px; }
.views { width: 302px; }
.pat { align-items: center; gap: 1px; }
.pat .btn { width: 17px; height: 27px; }
.patname { flex: 1; height: 26px; display: flex; align-items: center; justify-content: flex-end; gap: 3px; padding-right: 2px; background: #c4d1d8; color: #27323a; font-size: 14px; }
.plus { font: bold 15px/20px var(--sans); }
.news { width: 212px; gap: 4px; }
.green-btn { background: #506867; width: 29px; }
.newsbox { flex: 1; display: flex; align-items: center; justify-content: space-between; padding: 0 4px; background: #566c6d; border: 1px solid #465a5b; color: #dfeeea; font-size: 11px; text-decoration: none; white-space: nowrap; }
.newsbox span { color: #9db0b0; }
.newsbox .tri { border-left-color: #9aa6a8; }
.palm { position: absolute; right: 0; top: 0; width: 52px; height: 80px; color: #454d53; }

.body { display: flex; flex: 1; min-height: 0; }
.browser { width: 231px; display: flex; flex-direction: column; background: #262f36; flex: none; }
.bhead { height: 49px; background: #434b51; color: #858e93; flex: none; }
.bpath { display: flex; align-items: center; height: 23px; padding-left: 9px; gap: 6px; font: 12px/20px var(--sans); }
.bpath svg { width: 11px; height: 12px; }
.bpath .tri { border-left-color: #747c81; border-width: 4px; border-right: 0; }
.btabs { display: flex; justify-content: space-around; padding-top: 5px; }
.btabs svg { width: 15px; height: 15px; }
.btabs .on { color: #5c8cb4; }
.tree { flex: 1; margin-left: 13px; background: #1a232a; border-left: 1px solid #1d252b; }
.troot { display: flex; align-items: center; height: 26px; padding-left: 6px; gap: 4px; background: #222c33; color: #9bbbe0; font: 16px/22px var(--sans); }
.troot svg { width: 14px; height: 14px; }
.tree .tri { margin: 0 3px 0 auto; border-top-color: #12181c; }
.trow { display: flex; align-items: center; height: 23px; padding: 0 0 0 12px; color: #6781a3; font-size: 13px; line-height: 20px; }
.trow.hot { background: #27313a; color: #a5bfe2; }
.trow svg { width: 14px; height: 14px; margin-right: 5px; }
.guide { position: relative; width: 14px; height: 23px; flex: none; }
.guide.last { width: 8px; }
.gT::before, .gI::before { content: ''; position: absolute; left: 0; top: 0; bottom: 0; border-left: 1px solid #3d4850; }
.gL::before { content: ''; position: absolute; left: 0; top: 0; height: 12px; border-left: 1px solid #3d4850; }
.gT::after, .gL::after { content: ''; position: absolute; left: 0; top: 11px; width: 6px; border-top: 1px solid #3d4850; }
.divider { width: 8px; flex: none; background: #454e54; border-right: 1px solid #283036; display: flex; align-items: center; justify-content: center; }
.divider i { width: 2px; height: 18px; background: repeating-linear-gradient(#242b30 0 2px, transparent 2px 4px); }

.playlist { flex: 1; min-width: 0; display: flex; flex-direction: column; background: #3f484e; border-left: 1px solid #232b30; }
.ptitle { display: flex; align-items: center; height: 24px; padding: 0 7px 0 11px; gap: 6px; color: #cfd6d9; flex: none; }
.ptitle svg { width: 15px; height: 15px; }
.ptitle .mag { color: #74e08c; margin: 0 12px 0 4px; }
.ptitle .paint { color: #6fc0ef; }
.ptitle .out { margin-left: 12px; }
.ptitle h1 { margin: 0; font: 13px/20px var(--sans); }
.ptitle .dim { border-left-color: #7c8489; }
.ptitle .x { margin-left: auto; }
.ptitle .x svg { width: 11px; height: 11px; }
.pmain { display: flex; flex: 1; min-height: 0; }
.picker { width: 155px; margin-right: 5px; flex: none; display: flex; flex-direction: column; }
.ptabs { display: flex; gap: 31px; height: 40px; padding: 17px 0 0 14px; color: #8d9599; flex: none; }
.ptabs button { height: 17px; }
.ptabs svg { width: 17px; height: 17px; }
.ptabs .on { color: #dfe2e3; }
.plist { flex: 1; min-height: 0; display: flex; border: 1px solid #222a2f; background: #333d44; }
.pitems { flex: 1; min-width: 0; display: flex; flex-direction: column; gap: 5px; padding: 4px 2px 0 3px; }
.pitem { position: relative; display: flex; align-items: center; height: 26px; gap: 3px; padding-left: 2px; color: #dfe6e8; background: linear-gradient(#4c555a, #485156); border-bottom: 1px solid #3d464b; border-radius: 2px; font-size: 12px; text-align: left; white-space: nowrap; }
.pi { width: 9px; height: 9px; position: relative; }
.pitem span { position: relative; }
.mininotes { position: absolute; left: 0; top: 1px; width: 100%; height: 24px; color: #5c656a; }
.pitem.cur::before { content: ''; position: absolute; left: -3px; z-index: 1; border: 6px solid transparent; border-left: 7px solid #e04858; border-right: 0; }
.pscroll { width: 16px; flex: none; background: #363e43; border-left: 1px solid #2b3338; }
.pscroll i { display: block; height: 15px; background: #5a6268 linear-gradient(#20262a, #20262a) center / 2px 6px no-repeat; border: 1px solid #747c80; }
.addpat { height: 18px; flex: none; width: 142px; font: bold 16px/16px var(--sans); color: #cfd5d8; }

.arr { flex: 1; min-width: 0; display: flex; flex-direction: column; border-left: 1px solid #232b30; }
.ahead { display: flex; height: 40px; flex: none; }
.corner { position: relative; width: 111px; color: #d5dadd; font: 12px/18px var(--sans); }
.cshape { position: absolute; inset: 0; width: 100%; height: 100%; fill: #545d62; stroke: #6c7479; }
.ctop { position: relative; display: flex; justify-content: flex-end; gap: 8px; padding: 2px 5px 0 0; color: #7b8388; }
.ctop svg { width: 18px; height: 16px; }
.ctop .on { color: #e3e7e9; }
.cbot { position: relative; display: flex; justify-content: flex-end; gap: 5px; padding: 5px 6px 0 0; }
.cbot label { display: flex; align-items: center; gap: 1px; }
.cbot input { appearance: none; width: 11px; height: 11px; border: 1px solid #c3c9cc; border-radius: 4px; }
.cbot input[type=radio] { width: 8px; height: 8px; border-radius: 50%; border-color: #8b9397; background: radial-gradient(#e7ebed 35%, transparent 40%); margin-left: 3px; }
.scrollruler { flex: 1; min-width: 0; }
.hscroll { display: flex; height: 20px; background: #363e43; }
.hscroll button, .vtop button, .vscroll button { width: 19px; height: 19px; flex: none; background: #4c555a; border: 1px solid #656d72; color: #1f262a; display: flex; align-items: center; justify-content: center; }
.hscroll svg { width: 11px; height: 11px; }
.thumb { width: 76%; background: #50595f; border: 1px solid #676f74; border-bottom-color: #2e363b; }
.rest { flex: 1; }
.ruler { position: relative; height: 20px; background: linear-gradient(#222d33, #1d272d); border-top: 1px solid #151c20; font: 10px/20px var(--sans); color: #44515a; overflow: hidden; }
.ruler span { position: absolute; top: 0; }
.ruler .major { color: #aebbc0; font-size: 11px; font-weight: 600; }
.marker { position: absolute; top: 1px; margin-left: -7px; border: 7px solid transparent; border-top: 9px solid #a8d85a; border-bottom: 0; }
.vtop { width: 20px; padding-left: 1px; display: flex; flex-direction: column; gap: 1px; }
.vtop svg, .vscroll svg { width: 11px; height: 11px; }
.sq { width: 4px; height: 4px; background: #1f262a; }
.abody { display: flex; flex: 1; min-height: 0; overflow: hidden; }
.heads { width: 111px; flex: none; background: #1f2a30; }
.head { position: relative; display: flex; justify-content: space-between; width: 106px; height: 36px; padding-left: 2px; background: linear-gradient(#4b555a, #475055); border-bottom: 1px solid #3d464b; border-radius: 0 8px 8px 0; color: #7a8387; font: 14px/18px var(--narrow); }
.head.hot { background: #5e546c; color: #8e8799; }
.head span { text-shadow: 0 1px #3a4348; }
.head small { position: absolute; left: 12px; bottom: 1px; font: bold 13px/14px var(--sans); color: #363e43; }
.head svg { position: absolute; right: 20px; bottom: 3px; width: 15px; height: 15px; color: #8e8799; }
.led { position: absolute; right: 5px; bottom: 2px; width: 11px; height: 11px; border-radius: 50%; border: 1px solid #98a1a4; background: radial-gradient(#a8ee50 0 3px, #26400e 4px); }
.lanes { position: relative; flex: 1; min-width: 0; overflow: hidden; background:
  repeating-linear-gradient(90deg, transparent 0 calc(100% / 85.15 - 1px), #263740 calc(100% / 85.15 - 1px) calc(100% / 85.15)),
  repeating-linear-gradient(90deg, #34454f 0 calc(400% / 85.15), #2e3f49 calc(400% / 85.15) calc(800% / 85.15)); }
.lane { position: relative; height: 36px; border-top: 1px solid #10181d; }
.playhead { position: absolute; top: 0; bottom: 0; width: 1px; background: #8b989fb0; }
.vscroll { width: 20px; flex: none; padding-left: 1px; background: #363e43; display: flex; flex-direction: column; justify-content: space-between; }
.vthumb { height: 32px; margin-top: 8px; background: #4f585e; border: 1px solid #676f74; }

.clip { --h: #484f54; --w: #98a4a8; --t: #d3dbde; position: absolute; top: 0; height: 35px; background: #27323abf; overflow: hidden; }
.chead { display: flex; align-items: center; gap: 3px; height: 15px; padding-left: 2px; background: linear-gradient(#ffffff0d, transparent), var(--h); border: 1px solid #00000040; border-radius: 2px; color: var(--t); font-size: 11px; line-height: 13px; white-space: nowrap; overflow: hidden; }
.chead svg { width: 9px; height: 9px; }
.sample .chead { gap: 2px; }
.mini .chead { padding-left: 0; }
.mini .chead svg { width: 5px; }
.auto .chead svg { width: 11px; height: 11px; }
.auto .chead { gap: 1px; padding-left: 0; }
.tight .chead { font-size: 10px; padding-left: 1px; }
.notes, .wave, .curve { width: 100%; height: 20px; color: var(--w); }
.band { background: linear-gradient(transparent 14px, #59646a 14px 19px, transparent 19px); }
.dash { -webkit-mask: repeating-linear-gradient(90deg, #000 0 2px, #0009 2px 3px); mask: repeating-linear-gradient(90deg, #000 0 2px, #0009 2px 3px); }
.faded .chead { opacity: .75; }
.tiny .chead svg { opacity: .8; }
.ghost { opacity: .1; }
.striped .chead { background: repeating-linear-gradient(90deg, var(--h) 0 3px, #2a3339 3px 4px); }
.segs { background: none; }
.seghead { width: 100%; height: 15px; color: var(--h); }
.curve .area { fill: var(--w); opacity: .15; }
.curve .line { fill: none; stroke: var(--w); stroke-width: 1.500; vector-effect: non-scaling-stroke; }
.hot .pattern { background: #35384a; }
.hot .auto { background: #363a49; }
.pink { --h: #6b5068; --w: #bfa8bf; --t: #f0e2ee; }
.purple { --h: #5a526c; --w: #b1aac5; --t: #e4def0; }
.green { --h: #526a5c; --w: #acc2b4; --t: #dcf0e0; }
.mint { --h: #516a62; --w: #abc2bc; --t: #dcf0ea; }
.slate { --h: #50586c; --w: #a9b2c3; --t: #dfe6f2; }
.olive { --h: #5e6b50; --w: #b8c4ac; --t: #e6f0dc; }
.khaki { --h: #6a6952; --w: #c2c1aa; --t: #f0efdc; }
.brown { --h: #6c6250; --w: #c2b9a8; --t: #f0e8da; }
.tan { --h: #6e574e; --w: #c3b0aa; --t: #f2e4de; }
.brick { --h: #704f50; --w: #c4a8aa; --t: #f2e0e0; }
.rosy { --h: #6e4e58; --w: #c2a8b2; --t: #f2e0e8; }
.red { --h: #923838; --w: #e99090; }
.blue { --h: #4c5580; --w: #aab4e0; --t: #cfd8f2; }
.rose { --h: #7d4c63; --w: #d4a2b8; --t: #f0cfdd; }
.moss { --h: #526a56; --w: #bcd0c0; --t: #cfe4cf; }
.teal { --h: #457370; --w: #a6d2d0; --t: #cdecea; }
.brickA { --h: #7b4b4d; --w: #d0a0a2; --t: #f0cfcf; }
.magenta { --h: #764c76; --w: #c9a0c9; --t: #f0d8f0; }

.edge { height: 2px; flex: none; background: #878d90; }
.edge i { display: block; width: 58px; height: 2px; margin-left: 246px; background: #d8dadb; }
.gadget { position: absolute; right: 28px; top: 32px; width: 136px; height: 72px; display: flex; color: #3c4044; }
.gadget::before { content: ''; position: absolute; inset: 0 0 0 30px; border-radius: 0 7px 7px 0; background: linear-gradient(#dfe6ee, #f1f5f9 45%, #aab5c6); border: 1px solid #c3cad4; box-shadow: 1px 2px 4px #0006; }
.gauge { position: relative; width: 70px; height: 72px; }
.temp { position: absolute; left: 31px; top: 51px; font: 11px/13px Roboto, "Noto Sans CJK SC", sans-serif; color: #fff; }
.stats { position: relative; flex: 1; padding: 3px 6px 0 2px; font: 13px/18px var(--sans); }
.stats p { margin: 0; white-space: nowrap; }
.bar { height: 11px; margin-bottom: 3px; border: 1px solid #8c929a; border-radius: 1px; background: repeating-linear-gradient(90deg, #f2f3f4 0 5px, #dcdee1 5px 6px); }
.bar i { display: block; height: 100%; background: linear-gradient(#55bfe6, #2b98cc); }
</style>
